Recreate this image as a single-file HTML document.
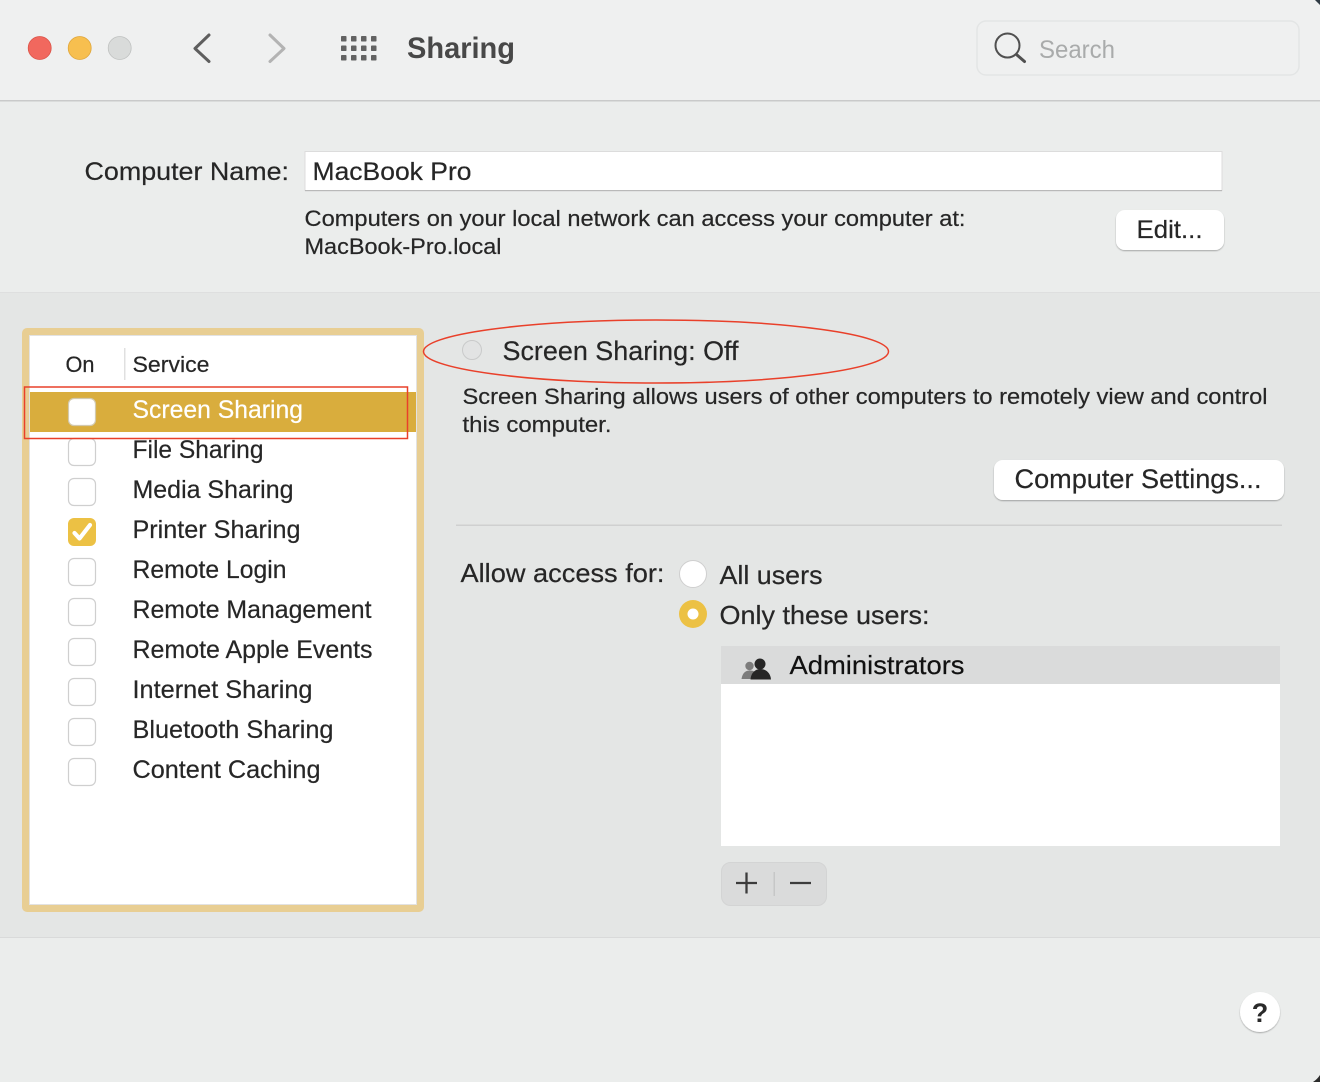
<!DOCTYPE html>
<html>
<head>
<meta charset="utf-8">
<style>
html,body{margin:0;padding:0;width:1320px;height:1082px;overflow:hidden;background:#ecedec}
svg{display:block}
text{font-family:"Liberation Sans",sans-serif;fill:#262626;font-size:25px;stroke:#262626;stroke-width:.2px}
</style>
</head>
<body>
<svg width="1320" height="1082" viewBox="0 0 1320 1082" xmlns="http://www.w3.org/2000/svg">
<defs>
<filter id="sh" x="-20%" y="-20%" width="140%" height="150%"><feDropShadow dx="0" dy="1" stdDeviation="0.8" flood-color="#000" flood-opacity=".3"/></filter>
</defs>
<!-- backgrounds -->
<rect width="1320" height="1082" fill="#ebedec"/>
<rect width="1320" height="100" fill="#eff0f0"/>
<rect y="100" width="1320" height="1.5" fill="#c9caca"/>
<rect y="293" width="1320" height="644" fill="#e4e6e5"/>
<rect y="292" width="1320" height="1" fill="#dedfdf"/>
<rect y="937" width="1320" height="1" fill="#d9dada"/>
<!-- corners -->
<path d="M1320 0h-5c2 2 3 3 5 5z" fill="#2f3a44"/>
<path d="M1320 1082h-7c3-2 5-4 7-7z" fill="#2b2b2b"/>
<!-- traffic lights -->
<circle cx="39.7" cy="48" r="11.5" fill="#f1685e" stroke="#dc5348" stroke-width=".8"/>
<circle cx="79.7" cy="48" r="11.5" fill="#f7bf4f" stroke="#e0a63a" stroke-width=".8"/>
<circle cx="119.7" cy="48" r="11.5" fill="#d9dbda" stroke="#bfc1c0" stroke-width=".8"/>
<!-- back/forward -->
<path d="M209 35 195 48.500 209 61.500" fill="none" stroke="#5e5e5e" stroke-width="3" stroke-linecap="round" stroke-linejoin="round"/>
<path d="M270 35 284 48.500 270 61.500" fill="none" stroke="#b3b3b3" stroke-width="3" stroke-linecap="round" stroke-linejoin="round"/>
<!-- grid -->
<g fill="#626262">
<rect x="341" y="36" width="5.500" height="5.500" rx=".8"/><rect x="351" y="36" width="5.500" height="5.500" rx=".8"/><rect x="361" y="36" width="5.500" height="5.500" rx=".8"/><rect x="371" y="36" width="5.500" height="5.500" rx=".8"/>
<rect x="341" y="45.500" width="5.500" height="5.500" rx=".8"/><rect x="351" y="45.500" width="5.500" height="5.500" rx=".8"/><rect x="361" y="45.500" width="5.500" height="5.500" rx=".8"/><rect x="371" y="45.500" width="5.500" height="5.500" rx=".8"/>
<rect x="341" y="55" width="5.500" height="5.500" rx=".8"/><rect x="351" y="55" width="5.500" height="5.500" rx=".8"/><rect x="361" y="55" width="5.500" height="5.500" rx=".8"/><rect x="371" y="55" width="5.500" height="5.500" rx=".8"/>
</g>
<text x="407" y="58" font-weight="bold" style="font-size:30px;fill:#484848;stroke:none" textLength="108" lengthAdjust="spacingAndGlyphs">Sharing</text>
<!-- search -->
<rect x="977" y="21" width="322" height="54" rx="9" fill="#eff0f0" stroke="#e3e5e5" stroke-width="1.500"/>
<circle cx="1007.500" cy="45.500" r="12" fill="none" stroke="#505050" stroke-width="2"/>
<path d="M1017 55 1024.500 61.500" stroke="#505050" stroke-width="3" stroke-linecap="round"/>
<text x="1039" y="58" style="fill:#a9abab;stroke:none" textLength="76" lengthAdjust="spacingAndGlyphs">Search</text>
<!-- computer name -->
<text x="84.500" y="180" textLength="204.500" lengthAdjust="spacingAndGlyphs">Computer Name:</text>
<rect x="305" y="151" width="917" height="40" fill="#fff"/>
<path d="M305 151.500H1222M305 151v40M1222 151v40" stroke="#dcdcdc" fill="none"/>
<rect x="305" y="190" width="917" height="1.200" fill="#b9b9b9"/>
<text x="312.500" y="180" textLength="159" lengthAdjust="spacingAndGlyphs">MacBook Pro</text>
<text x="304.500" y="226" style="font-size:22px" textLength="661" lengthAdjust="spacingAndGlyphs">Computers on your local network can access your computer at:</text>
<text x="304.500" y="254" style="font-size:22px" textLength="197" lengthAdjust="spacingAndGlyphs">MacBook-Pro.local</text>
<rect x="1116" y="210" width="108" height="40" rx="9" fill="#fff" filter="url(#sh)"/>
<text x="1136.500" y="238" textLength="66" lengthAdjust="spacingAndGlyphs">Edit...</text>
<!-- list -->
<rect x="22" y="328" width="402" height="584" rx="5" fill="#e8ce93"/>
<rect x="29.500" y="335.500" width="387" height="569" fill="#fff" stroke="#e2e2e2"/>
<rect x="124" y="348" width="1.500" height="32" fill="#e0e0e0"/>
<text x="65.500" y="372" style="font-size:22px" textLength="29" lengthAdjust="spacingAndGlyphs">On</text>
<text x="132.500" y="372" style="font-size:22px" textLength="77" lengthAdjust="spacingAndGlyphs">Service</text>
<rect x="30" y="392" width="386" height="40" fill="#d9ad3d"/>
<!-- checkboxes -->
<g fill="#fff" stroke="#cfcfcf" stroke-width="1.200">
<rect x="68.500" y="398.500" width="27" height="27" rx="5.500" stroke="#d2c9ae"/>
<rect x="68.500" y="438.500" width="27" height="27" rx="5.500"/>
<rect x="68.500" y="478.500" width="27" height="27" rx="5.500"/>
<rect x="68.500" y="558.500" width="27" height="27" rx="5.500"/>
<rect x="68.500" y="598.500" width="27" height="27" rx="5.500"/>
<rect x="68.500" y="638.500" width="27" height="27" rx="5.500"/>
<rect x="68.500" y="678.500" width="27" height="27" rx="5.500"/>
<rect x="68.500" y="718.500" width="27" height="27" rx="5.500"/>
<rect x="68.500" y="758.500" width="27" height="27" rx="5.500"/>
</g>
<rect x="68" y="518" width="28" height="28" rx="6" fill="#ecc144"/>
<path d="M74.500 533 79.500 538.500 90 525" fill="none" stroke="#fff" stroke-width="4.200" stroke-linecap="round" stroke-linejoin="round"/>
<!-- services -->
<text x="132.500" y="418" style="fill:#fff;stroke:#fff" textLength="170.500" lengthAdjust="spacingAndGlyphs">Screen Sharing</text>
<text x="132.500" y="458" textLength="131" lengthAdjust="spacingAndGlyphs">File Sharing</text>
<text x="132.500" y="498" textLength="161" lengthAdjust="spacingAndGlyphs">Media Sharing</text>
<text x="132.500" y="538" textLength="168" lengthAdjust="spacingAndGlyphs">Printer Sharing</text>
<text x="132.500" y="578" textLength="154" lengthAdjust="spacingAndGlyphs">Remote Login</text>
<text x="132.500" y="618" textLength="239" lengthAdjust="spacingAndGlyphs">Remote Management</text>
<text x="132.500" y="658" textLength="240" lengthAdjust="spacingAndGlyphs">Remote Apple Events</text>
<text x="132.500" y="698" textLength="180" lengthAdjust="spacingAndGlyphs">Internet Sharing</text>
<text x="132.500" y="738" textLength="201" lengthAdjust="spacingAndGlyphs">Bluetooth Sharing</text>
<text x="132.500" y="778" textLength="188" lengthAdjust="spacingAndGlyphs">Content Caching</text>
<!-- red rect -->
<rect x="24.500" y="387" width="383" height="51.500" fill="none" stroke="#e9402a" stroke-width="1.500"/>
<!-- right pane -->
<ellipse cx="656" cy="351.500" rx="232.500" ry="31.500" fill="none" stroke="#e9402a" stroke-width="1.500"/>
<circle cx="472" cy="350" r="9.500" fill="#e2e3e3" stroke="#c9caca"/>
<text x="502.500" y="360" style="font-size:27px" textLength="236" lengthAdjust="spacingAndGlyphs">Screen Sharing: Off</text>
<text x="462.500" y="404" style="font-size:22.500px" textLength="805" lengthAdjust="spacingAndGlyphs">Screen Sharing allows users of other computers to remotely view and control</text>
<text x="462.500" y="432" style="font-size:22.500px" textLength="149" lengthAdjust="spacingAndGlyphs">this computer.</text>
<rect x="994" y="460" width="290" height="40" rx="9" fill="#fff" filter="url(#sh)"/>
<text x="1014.500" y="488" style="font-size:27px" textLength="247" lengthAdjust="spacingAndGlyphs">Computer Settings...</text>
<rect x="456" y="524.500" width="826" height="1.500" fill="#cfd0d0"/>
<text x="460.500" y="582" style="font-size:26px" textLength="204" lengthAdjust="spacingAndGlyphs">Allow access for:</text>
<circle cx="693" cy="574" r="13.500" fill="#fff" stroke="#cfcfcf"/>
<text x="719.500" y="584" style="font-size:26px" textLength="103" lengthAdjust="spacingAndGlyphs">All users</text>
<circle cx="693" cy="614" r="14" fill="#ecc144"/>
<circle cx="693" cy="614" r="5.500" fill="#fff"/>
<text x="719.500" y="624" style="font-size:26px" textLength="210" lengthAdjust="spacingAndGlyphs">Only these users:</text>
<!-- users list -->
<rect x="721" y="684" width="559" height="162" fill="#fff"/>
<rect x="721" y="646" width="559" height="38" fill="#dadbdb"/>
<circle cx="749.500" cy="666" r="4.200" fill="#7c7c7c"/>
<path d="M741.500 679c1-6 4-8.500 8-8.500s5 1 6 3l-3 5.500z" fill="#7c7c7c"/>
<circle cx="760" cy="664" r="5.500" fill="#262626"/>
<path d="M750.500 679.500c.5-7 5-10.500 10-10.500s10 3.500 10.500 10.500z" fill="#262626"/>
<text x="789.500" y="674" style="font-size:26px;fill:#111;stroke:#111" textLength="175" lengthAdjust="spacingAndGlyphs">Administrators</text>
<!-- plus minus -->
<rect x="721.500" y="862.500" width="105" height="43" rx="9" fill="#dadbdb" stroke="#d3d4d4"/>
<path d="M736 883h21M746.500 872.500v21M790 883h21" stroke="#3c3c3c" stroke-width="2.300" fill="none"/>
<rect x="773.500" y="872" width="1.500" height="24" fill="#c6c7c7"/>
<!-- help -->
<circle cx="1260" cy="1012" r="20" fill="#fff" filter="url(#sh)"/>
<text x="1260" y="1022" text-anchor="middle" font-weight="bold" style="font-size:27px;fill:#2a2a2a;stroke:none">?</text>
</svg>
</body>
</html>
